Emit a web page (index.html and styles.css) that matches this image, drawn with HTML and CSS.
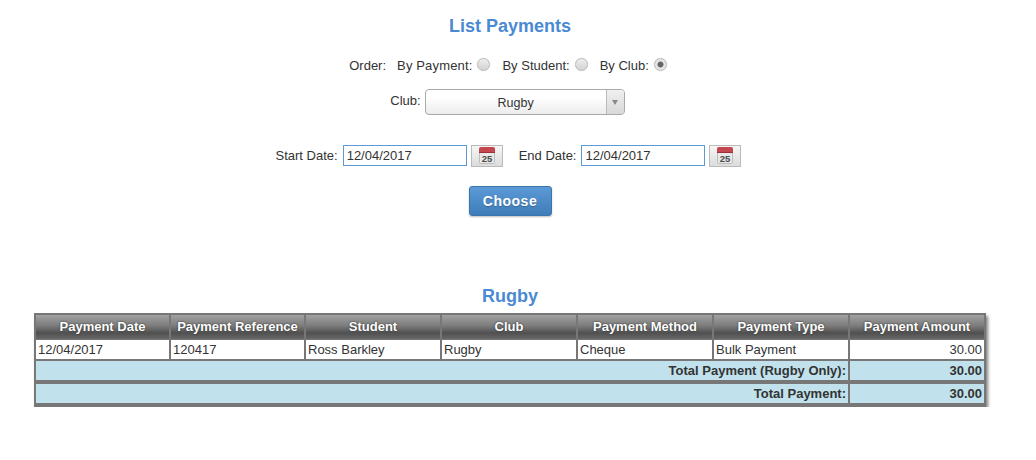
FILE: index.html
```html
<!DOCTYPE html>
<html lang="en">
<head>
<meta charset="utf-8">
<title>List Payments</title>
<link rel="stylesheet" href="styles.css">
</head>
<body>
<main class="page">
  <h1 class="title">List Payments</h1>
  <form class="filters">
    <div class="row order">
      <span class="order-label">Order:</span>
      <label class="opt">By Payment: <input class="radio" type="radio" name="order"></label>
      <label class="opt">By Student: <input class="radio" type="radio" name="order"></label>
      <label class="opt">By Club: <input class="radio" type="radio" name="order" checked></label>
    </div>
    <div class="row club">
      <span class="club-label">Club:</span>
      <div class="select">
        <span class="select-value">Rugby</span>
        <span class="select-arrow"><span class="tri"></span></span>
      </div>
    </div>
    <div class="row dates">
      <div class="date-field">
        <label class="date-label">Start Date:</label>
        <input class="date" type="text" value="12/04/2017">
        <button class="cal" type="button" aria-label="Calendar">
          <svg width="16" height="17" viewBox="0 0 16 17"><rect x="0.5" y="1" width="15" height="15.5" rx="1" fill="#e8e8e8" stroke="#bdbdbd"/><path d="M0 6V2a2 2 0 0 1 2-2h12a2 2 0 0 1 2 2v4z" fill="#c4474f"/><rect x="0" y="5" width="16" height="1" fill="#9c3038"/><text x="8" y="15" text-anchor="middle" class="cal-num">25</text></svg>
        </button>
      </div>
      <div class="date-field">
        <label class="date-label">End Date:</label>
        <input class="date" type="text" value="12/04/2017">
        <button class="cal" type="button" aria-label="Calendar">
          <svg width="16" height="17" viewBox="0 0 16 17"><rect x="0.5" y="1" width="15" height="15.5" rx="1" fill="#e8e8e8" stroke="#bdbdbd"/><path d="M0 6V2a2 2 0 0 1 2-2h12a2 2 0 0 1 2 2v4z" fill="#c4474f"/><rect x="0" y="5" width="16" height="1" fill="#9c3038"/><text x="8" y="15" text-anchor="middle" class="cal-num">25</text></svg>
        </button>
      </div>
    </div>
    <div class="row submit"><button class="choose" type="button">Choose</button></div>
  </form>
  <h2 class="subtitle">Rugby</h2>
  <table class="grid">
    <colgroup>
      <col class="c135"><col class="c135"><col class="c136"><col class="c136"><col class="c136"><col class="c136"><col class="c134">
    </colgroup>
    <thead>
      <tr>
        <th>Payment Date</th><th>Payment Reference</th><th>Student</th><th>Club</th><th>Payment Method</th><th>Payment Type</th><th>Payment Amount</th>
      </tr>
    </thead>
    <tbody>
      <tr class="data">
        <td>12/04/2017</td><td>120417</td><td>Ross Barkley</td><td>Rugby</td><td>Cheque</td><td>Bulk Payment</td><td class="num">30.00</td>
      </tr>
      <tr class="total sub">
        <td colspan="6" class="tlabel">Total Payment (Rugby Only):</td><td class="num">30.00</td>
      </tr>
      <tr class="total">
        <td colspan="6" class="tlabel">Total Payment:</td><td class="num">30.00</td>
      </tr>
    </tbody>
  </table>
</main>
</body>
</html>
```
FILE: styles.css
```css
* { box-sizing: border-box; }
html, body { margin: 0; padding: 0; background: #fff; }
body { font-family: "Liberation Sans", Arial, sans-serif; font-size: 13px; color: #333; }
.page { width: 1020px; padding-top: 16px; display: flex; flex-direction: column; align-items: center; }
.title { margin: 0; font-size: 18px; line-height: 20px; font-weight: bold; color: #4a8ad4; }
.filters { display: flex; flex-direction: column; align-items: center; }
.row { display: flex; align-items: center; justify-content: center; }
.order { margin-top: 19px; height: 20px; padding-right: 4px; }
.order-label { margin-right: 11px; }
.opt { margin-right: 12px; display: flex; align-items: center; gap: 5px; }
.opt:first-of-type { letter-spacing: .15px; }
.opt:last-child { margin-right: 0; }
.radio { appearance: none; -webkit-appearance: none; width: 13px; height: 13px; margin: -2px 0 0 0; border-radius: 50%; border: 1px solid #bbb; background: linear-gradient(#eee, #d2d2d2); box-shadow: 0 0 1px #ccc; }
.radio:checked { background: radial-gradient(circle, #666 0, #666 2.6px, #e8e8e8 3.4px, #ddd 100%); }
.club { margin-top: 14px; height: 26px; padding-right: 5px; }
.club-label { margin-right: 4px; margin-top: -3px; }
.select { width: 200px; height: 26px; border: 1px solid #aaa; border-radius: 4px; background: linear-gradient(#fff 30%, #ececec); display: flex; }
.select-value { flex: 1; text-align: center; line-height: 26px; font-size: 12.5px; }
.select-arrow { width: 18px; border-left: 1px solid #bbb; background: linear-gradient(#f0f0f0, #d8d8d8); display: flex; align-items: center; justify-content: center; border-radius: 0 3px 3px 0; }
.tri { width: 0; height: 0; border-left: 3.5px solid transparent; border-right: 3.5px solid transparent; border-top: 5px solid #888; }
.dates { margin-top: 29px; height: 23px; gap: 16px; padding-right: 3px; }
.date-field { display: flex; align-items: center; }
.date-label { margin-right: 5px; }
.date { width: 124px; height: 21px; border: 1px solid #5b9bd5; padding: 0 3px; font: 13px "Liberation Sans", Arial, sans-serif; color: #333; margin-top: -1px; outline: none; }
.cal { width: 32px; height: 22px; margin-left: 4px; padding: 0; border: 1px solid #bbb; background: linear-gradient(#f6f6f6, #dcdcdc); display: flex; align-items: center; justify-content: center; }
.cal-num { font: bold 9.5px "Liberation Sans", Arial, sans-serif; fill: #4a4a4a; }
.submit { margin-top: 19px; }
.choose { width: 83px; height: 30px; padding: 0; border: 1px solid #3a75ad; border-radius: 3px; background: linear-gradient(#5b9ad6, #3f7db9); color: #fff; font: bold 14px "Liberation Sans", Arial, sans-serif; letter-spacing: .5px; box-shadow: 0 1px 2px rgba(0,0,0,.25); text-shadow: 0 1px 1px rgba(0,0,0,.25); }
.subtitle { margin: 70px 0 0; font-size: 18px; line-height: 20px; font-weight: bold; color: #4a8ad4; }
.grid { margin-top: 7px; width: 952px; border-collapse: separate; border-spacing: 0; table-layout: fixed; border: 2px solid #777; border-bottom-width: 4px; background: #fff; box-shadow: 2px 3px 3px rgba(0,0,0,.5); }
.c135 { width: 135px; } .c136 { width: 136px; } .c134 { width: 134px; }
th, td { padding: 0 2px; border-right: 2px solid #777; }
th:last-child, td:last-child { border-right: 0; }
th { height: 25px; padding-bottom: 2px; border-bottom: 1px solid #777; color: #fff; font-size: 13px; font-weight: bold; text-align: center; text-shadow: 0 0 2px #222; background: linear-gradient(#a2a2a2, #7c7c7c 45%, #505050 75%, #686868); }
td { height: 21px; border-bottom: 2px solid #777; font-size: 13px; text-align: left; white-space: nowrap; }
.num { text-align: right; }
.total td { background: #c1e2ec; font-weight: bold; }
.tlabel { text-align: right; }
.total.sub td { height: 23px; border-bottom-width: 4px; }
.total:last-child td { height: 19px; border-bottom: 0; }
```
